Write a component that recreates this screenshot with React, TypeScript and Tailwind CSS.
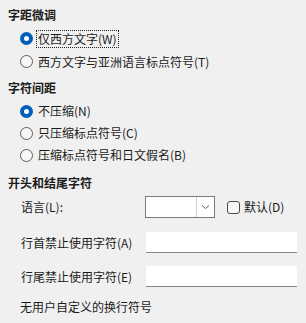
import React from 'react'

const font = { fontFamily: '"Noto Sans CJK SC", "Noto Sans", sans-serif' }

function Radio({ checked, label, focused }: { checked?: boolean; label: string; focused?: boolean }) {
  return (
    <div className="flex items-center h-full pl-[20px]">
      {checked ? (
        <span className="w-[13px] h-[13px] rounded-full bg-[#005fb8] flex items-center justify-center">
          <span className="w-[5px] h-[5px] rounded-full bg-white" />
        </span>
      ) : (
        <span className="w-[13px] h-[13px] rounded-full border border-[#5c5c5c] bg-[#f7f7f7]" />
      )}
      <span
        className={
          focused
            ? 'ml-[4px] px-[1px] leading-[16px] outline outline-1 outline-dotted outline-[#222]'
            : 'ml-[5px] leading-[16px]'
        }
      >
        {label}
      </span>
    </div>
  )
}

export default function App() {
  return (
    <div
      className="w-[306px] h-[323px] bg-[#f0f0f0] text-[#1b1b1b] text-[12px] overflow-hidden flex flex-col"
      style={font}
    >
      <div className="mt-[5px] h-[20px] leading-[20px] pl-[8px] font-bold">字距微调</div>
      <div className="mt-[2px] h-[23px]">
        <Radio checked focused label="仅西方文字(W)" />
      </div>
      <div className="h-[23px]">
        <Radio label="西方文字与亚洲语言标点符号(T)" />
      </div>

      <div className="mt-[5px] h-[20px] leading-[20px] pl-[8px] font-bold">字符间距</div>
      <div className="mt-[2px] h-[22px]">
        <Radio checked label="不压缩(N)" />
      </div>
      <div className="h-[22px]">
        <Radio label="只压缩标点符号(C)" />
      </div>
      <div className="h-[22px]">
        <Radio label="压缩标点符号和日文假名(B)" />
      </div>

      <div className="mt-[7px] h-[20px] leading-[20px] pl-[8px] font-bold">开头和结尾字符</div>
      <div className="mt-[3px] h-[22px] flex items-center">
        <span className="w-[145px] pl-[21px]">语言(L):</span>
        <div className="w-[70px] h-[22px] border border-[#7a7a7a] bg-white flex justify-end">
          <div className="w-[18px] h-full border-l border-[#cfcfcf] flex items-center justify-center">
            <svg width="9" height="6" viewBox="0 0 9 6" fill="none">
              <path d="M1 1.5 L4.5 4.5 L8 1.5" stroke="#606060" strokeWidth="1" />
            </svg>
          </div>
        </div>
        <span className="ml-[12px] w-[13px] h-[13px] rounded-[3px] border border-[#4a4a4a] bg-[#f7f7f7]" />
        <span className="ml-[4px]">默认(D)</span>
      </div>

      <div className="mt-[14px] h-[21px] flex items-center">
        <span className="w-[146px] pl-[21px]">行首禁止使用字符(A)</span>
        <div className="w-[151px] h-[21px] bg-white border-b border-[#868686]" />
      </div>
      <div className="mt-[13px] h-[21px] flex items-center">
        <span className="w-[146px] pl-[21px]">行尾禁止使用字符(E)</span>
        <div className="w-[151px] h-[21px] bg-white border-b border-[#868686]" />
      </div>

      <div className="mt-[10px] h-[20px] leading-[20px] pl-[20px]">无用户自定义的换行符号</div>
    </div>
  )
}
